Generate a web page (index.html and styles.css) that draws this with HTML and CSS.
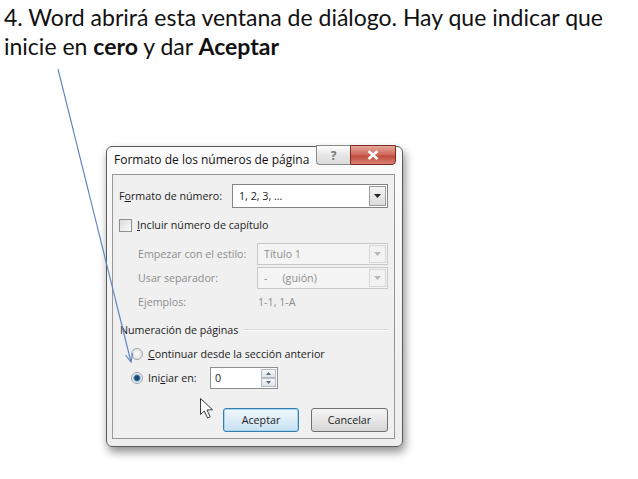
FILE: index.html
```html
<!DOCTYPE html>
<html>
<head>
  <meta charset="utf-8">
  <title>Formato de los números de página</title>
  <link rel="stylesheet" href="styles.css">
</head>
<body>
  <p class="intro">4. Word abrirá esta ventana de diálogo. Hay que indicar que<br>inicie en <b>cero</b> y dar <b>Aceptar</b></p>

  <div class="dialog">
    <div class="titlebar">
      <span class="title">Formato de los números de página</span>
      <div class="caption-btns">
        <span class="btn-help">?</span>
        <span class="btn-close">
          <svg width="12" height="10" viewBox="0 0 12 10"><path d="M1.5 1 L10.5 9 M10.5 1 L1.5 9" stroke="#fff" stroke-width="2.6"/></svg>
        </span>
      </div>
    </div>

    <div class="panel">
      <div class="row">
        <span class="lbl lbl-main">F<u>o</u>rmato de número:</span>
        <div class="combo">
          <span class="combo-text">1, 2, 3, …</span>
          <span class="combo-btn"><svg width="7" height="4" viewBox="0 0 7 4"><path d="M0 0 H7 L3.5 4 Z" fill="#222"/></svg></span>
        </div>
      </div>

      <div class="row">
        <span class="check"></span>
        <span class="check-text"><u>I</u>ncluir número de capítulo</span>
      </div>

      <div class="row row-off">
        <span class="lbl lbl-sub">Empezar con el estilo:</span>
        <div class="combo combo-off">
          <span class="combo-text">Título 1</span>
          <span class="combo-btn"><svg width="7" height="4" viewBox="0 0 7 4"><path d="M0 0 H7 L3.5 4 Z" fill="#b5b5b5"/></svg></span>
        </div>
      </div>

      <div class="row row-off">
        <span class="lbl lbl-sub">Usar separador:</span>
        <div class="combo combo-off">
          <span class="combo-text">-<span class="gap"></span>(guión)</span>
          <span class="combo-btn"><svg width="7" height="4" viewBox="0 0 7 4"><path d="M0 0 H7 L3.5 4 Z" fill="#b5b5b5"/></svg></span>
        </div>
      </div>

      <div class="row row-off">
        <span class="lbl lbl-sub">Ejemplos:</span>
        <span class="sample">1-1, 1-A</span>
      </div>

      <div class="row group">
        <span>Numeración de páginas</span>
      </div>

      <div class="row">
        <span class="radio"></span>
        <span class="radio-text"><u>C</u>ontinuar desde la sección anterior</span>
      </div>

      <div class="row">
        <span class="radio radio-on"></span>
        <span class="radio-text radio-start">Ini<u>c</u>iar en:</span>
        <div class="spin">
          <span class="spin-text">0</span>
          <span class="spin-btns">
            <span class="spin-up"><svg width="5" height="3" viewBox="0 0 5 3"><path d="M0 3 H5 L2.5 0 Z" fill="#5a6a7a"/></svg></span>
            <span class="spin-down"><svg width="5" height="3" viewBox="0 0 5 3"><path d="M0 0 H5 L2.5 3 Z" fill="#5a6a7a"/></svg></span>
          </span>
        </div>
      </div>

      <div class="actions">
        <span class="button button-default">Aceptar</span>
        <span class="button">Cancelar</span>
      </div>
    </div>
  </div>

  <!-- flecha del texto al botón y puntero del ratón -->
  <svg class="overlay" width="638" height="479" viewBox="0 0 638 479">
    <path d="M58 69 L131 362" stroke="#5a80c0" stroke-width="1.1" fill="none"/>
    <path d="M125.5 355 L131 362 L132.8 353.4" stroke="#5a80c0" stroke-width="1.1" fill="none"/>
    <path d="M200.5 398.5 L200.5 414.5 L204.3 411 L207.6 418 L210.2 416.8 L207 410 L212.5 409.7 Z" fill="#fff" stroke="#3a3a3a" stroke-width="1" stroke-linejoin="round"/>
  </svg>
</body>
</html>
```

FILE: styles.css
```css
* {
  box-sizing: border-box;
}

html,
body {
  margin: 0;
  padding: 0;
}

body {
  position: relative;
  width: 638px;
  height: 479px;
  overflow: hidden;
  background: #fff;
  font-family: "Lato", "Liberation Sans", sans-serif;
}

.intro {
  margin: 0;
  height: 62px;
  padding: 3px 0 0 4px;
  font-size: 23px;
  line-height: 29px;
  color: #111;
  white-space: nowrap;
}

/* ventana */
.dialog {
  width: 297px;
  height: 301px;
  margin: 84px 0 0 106px;
  padding: 0 7px 7px 5px;
  border: 1px solid #5c5c5c;
  border-radius: 6px;
  background: linear-gradient(#fbfbfb, #ededed);
  box-shadow: 2px 5px 10px rgba(0, 0, 0, .45);
  font-family: "Open Sans", "Noto Sans", sans-serif;
  font-size: 10.7px;
  color: #1c1c1c;
}

.titlebar {
  display: flex;
  align-items: flex-start;
  height: 27px;
}
.title {
  padding-left: 2px;
  line-height: 26px;
  font-size: 12px;
  color: #111;
}
.caption-btns {
  display: flex;
  margin: -2px -1px 0 auto;
}
.btn-help,
.btn-close {
  display: flex;
  align-items: center;
  justify-content: center;
  height: 20px;
}
.btn-help {
  width: 34px;
  border: 1px solid #8a8a8a;
  border-right: 0;
  border-radius: 0 0 0 4px;
  background: linear-gradient(#ffffff, #e6e6e6 50%, #dcdcdc);
  color: #777;
  font-size: 12px;
  font-weight: bold;
}
.btn-close {
  width: 46px;
  border: 1px solid #7b2b22;
  border-radius: 0 0 4px 0;
  background: linear-gradient(#e6a89c, #cf6457 50%, #c04a3c 55%, #d98274);
}

.panel {
  display: grid;
  grid-template-rows: 24px 34px 24px 24px 24px 32px 16px 32px;
  height: 265px;
  padding: 9px 6px 6px;
  border: 1px solid #979797;
  background: #f0f0f0;
}

.row {
  display: flex;
  align-items: center;
  white-space: nowrap;
}
.row-off {
  color: #8e8e8e;
}
.lbl-main {
  width: 113px;
}
.lbl-sub {
  width: 119px;
  margin-left: 19px;
}

.combo {
  display: flex;
  align-items: center;
  flex: 1;
  height: 24px;
  padding: 1px;
  border: 1px solid #848484;
  background: #fff;
}
.combo-off {
  height: 22px;
  border-color: #c8c8c8;
  background: #f4f4f4;
}
.combo-text {
  flex: 1;
  padding-left: 5px;
}
.combo-btn {
  display: flex;
  align-items: center;
  justify-content: center;
  width: 17px;
  height: 100%;
  border: 1px solid #9c9c9c;
  background: linear-gradient(#f4f4f4, #dcdcdc);
}
.combo-off .combo-btn {
  border-color: #d6d6d6;
  background: #f2f2f2;
}
.gap {
  display: inline-block;
  width: 15px;
}
.sample {
  margin-left: 1px;
}

.check {
  width: 13px;
  height: 13px;
  border: 1px solid #8e8f8f;
  background: linear-gradient(135deg, #dcdcdc, #fafafa);
}
.check-text {
  margin-left: 5px;
}

.group span {
  margin-left: 1px;
}
.group::after {
  content: "";
  flex: 1;
  height: 1px;
  margin-left: 5px;
  background: #d8d8d8;
  border-bottom: 1px solid #fff;
}

.radio {
  width: 12px;
  height: 12px;
  margin-left: 12px;
  border: 1px solid #a0a6ac;
  border-radius: 50%;
  background: radial-gradient(#ffffff, #d6d6d6);
}
.radio-on {
  background: radial-gradient(circle, #1c4a6e 0 2px, #4a8ab8 3px, #e8eef2 4px);
}
.radio-text {
  margin-left: 5px;
}
.radio-start {
  width: 62px;
}

.spin {
  display: flex;
  align-items: center;
  width: 68px;
  height: 22px;
  padding: 1px;
  border: 1px solid #8e8e8e;
  background: #fff;
}
.spin-text {
  flex: 1;
  padding-left: 3px;
}
.spin-btns {
  display: flex;
  flex-direction: column;
  width: 15px;
  height: 100%;
}
.spin-up,
.spin-down {
  display: flex;
  align-items: center;
  justify-content: center;
  flex: 1;
  border: 1px solid #b5bcc4;
  background: linear-gradient(#f6f8fa, #dde3ea);
}

.actions {
  display: flex;
  justify-content: flex-end;
  gap: 12px;
  margin-top: 14px;
}
.button {
  display: flex;
  align-items: center;
  justify-content: center;
  width: 77px;
  height: 24px;
  border: 1px solid #707070;
  border-radius: 3px;
  background: linear-gradient(#f4f4f4, #e6e6e6 50%, #d6d6d6);
}
.button-default {
  width: 76px;
  border-color: #3a7cae;
  box-shadow: inset 0 0 0 1px #9fd6f2;
  background: linear-gradient(#f0f8fd, #dcecf7 50%, #c8e2f3);
}

.overlay {
  position: absolute;
  top: 0;
  left: 0;
  pointer-events: none;
}
```
